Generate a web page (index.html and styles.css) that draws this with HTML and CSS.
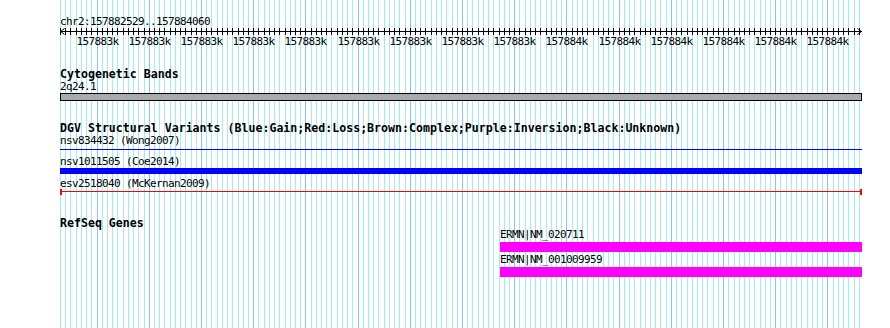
FILE: index.html
```html
<!DOCTYPE html>
<html lang="en">
<head>
    <meta charset="UTF-8">
    <meta name="viewport" content="width=device-width, initial-scale=1.0">
    <title>chr2:157882529..157884060</title>
    <link rel="stylesheet" href="styles.css">

    <script type="module">
        const $ = el => document.querySelector(el)
        const NS = 'http://www.w3.org/2000/svg'

        // region shown in the panel
        const START = 157882530
        const END = 157884060
        const LEFT = 60
        const SCALE = 0.5221

        const $grid = $('.grid')
        const $ruler = $('.ruler')

        const xOf = bp => Math.floor(LEFT + 0.5 + (bp - START) * SCALE)

        function add(parent, tag, attrs) {
            const el = document.createElementNS(NS, tag)
            for (const key in attrs) el.setAttribute(key, attrs[key])
            parent.appendChild(el)
            return el
        }

        for (let bp = START; bp <= END; bp += 10) {
            const x = xOf(bp) + 0.5
            const major = bp % 100 === 0
            add($grid, 'line', { x1: x, x2: x, y1: 0, y2: 328, class: major ? 'major' : 'minor' })
            add($ruler, 'line', { x1: x - LEFT, x2: x - LEFT, y1: 0, y2: 7, class: 'tick' })

            if (major) {
                const $label = add($ruler, 'text', { x: x - LEFT, y: 17, class: 'label' })
                $label.textContent = Math.round(bp / 1000) + 'k'
            }
        }
    </script>
</head>
<body>
    <div class="view">
        <svg class="grid" width="890" height="328"></svg>

        <div class="panel">
            <div class="locus">chr2:157882529..157884060</div>

            <svg class="ruler" width="802" height="21">
                <line class="axis" x1="0" x2="802" y1="3.5" y2="3.5"></line>
                <path class="arrow" d="M4.5 0.5 L0.5 3.5 L4.5 6.5"></path>
                <path class="arrow" d="M797.5 0.5 L801.5 3.5 L797.5 6.5"></path>
            </svg>

            <section class="track cyto">
                <h2>Cytogenetic Bands</h2>
                <div class="name">2q24.1</div>
                <div class="band"></div>
            </section>

            <section class="track dgv">
                <h2>DGV Structural Variants (Blue:Gain;Red:Loss;Brown:Complex;Purple:Inversion;Black:Unknown)</h2>
                <div class="name">nsv834432 (Wong2007)</div>
                <div class="sv thin"></div>
                <div class="name spaced">nsv1011505 (Coe2014)</div>
                <div class="sv gain"></div>
                <div class="name spaced-sm">esv2518040 (McKernan2009)</div>
                <div class="sv loss"></div>
            </section>

            <section class="track refseq">
                <h2>RefSeq Genes</h2>
                <div class="gene">
                    <div class="name">ERMN|NM_020711</div>
                    <div class="exon"></div>
                </div>
                <div class="gene next">
                    <div class="name">ERMN|NM_001009959</div>
                    <div class="exon"></div>
                </div>
            </section>
        </div>
    </div>
</body>
</html>
```

FILE: styles.css
```css
body {
    margin: 0;
    padding: 0;
    background: #fff;
    color: #000;
    font-family: "DejaVu Sans Mono", "Liberation Mono", monospace;
    font-size: 11px;
    letter-spacing: -0.62px;
}

.view {
    position: relative;
    width: 890px;
    height: 328px;
    overflow: hidden;
}

.grid {
    position: absolute;
    left: 0;
    top: 0;
    shape-rendering: crispEdges;

    .minor {
        stroke: #a6e9ee;
        stroke-width: 1;
    }

    .major {
        stroke: #88c3ee;
        stroke-width: 1;
    }
}

.panel {
    position: relative;
    padding: 16px 0 0 60px;
    width: 802px;
}

.locus,
.name {
    line-height: 11px;
    height: 12px;
    white-space: nowrap;
}

.ruler {
    display: block;
    overflow: visible;

    .axis,
    .tick {
        stroke: #000;
        stroke-width: 1;
        shape-rendering: crispEdges;
    }

    .arrow {
        fill: none;
        stroke: #000;
        stroke-width: 1;
    }

    .label {
        font-family: "DejaVu Sans Mono", "Liberation Mono", monospace;
        font-size: 11px;
        letter-spacing: -0.62px;
        text-anchor: middle;
        fill: #000;
    }
}

.track {
    margin-top: 19px;

    h2 {
        margin: 0;
        font-size: 11.6px;
        font-weight: bold;
        letter-spacing: 0;
        line-height: 13px;
        height: 13px;
        white-space: nowrap;
    }

    &.dgv,
    &.refseq {
        margin-top: 21px;
    }

    &.refseq {
        margin-top: 22px;
    }
}

.band {
    height: 6px;
    border: 1px solid #000;
    background: #aaa;
}

.sv {
    &.thin {
        margin-top: 2px;
        height: 1px;
        background: #0000ff;
    }

    &.gain {
        height: 6px;
        background: #0000ff;
    }

    &.loss {
        position: relative;
        margin-top: -1px;
        height: 6px;
        border-left: 2px solid #ff0000;
        border-right: 2px solid #ff0000;

        &::before {
            content: "";
            position: absolute;
            left: 0;
            right: 0;
            top: 2px;
            height: 1px;
            background: #ff0000;
        }
    }
}

.name.spaced {
    margin-top: 6px;
}

.name.spaced-sm {
    margin-top: 4px;
}

.gene {
    margin-left: 440px;

    &.next {
        margin-top: 3px;
    }

    .name {
        line-height: 10px;
    }

    .exon {
        height: 10px;
        background: #ff00ff;
    }
}
```
